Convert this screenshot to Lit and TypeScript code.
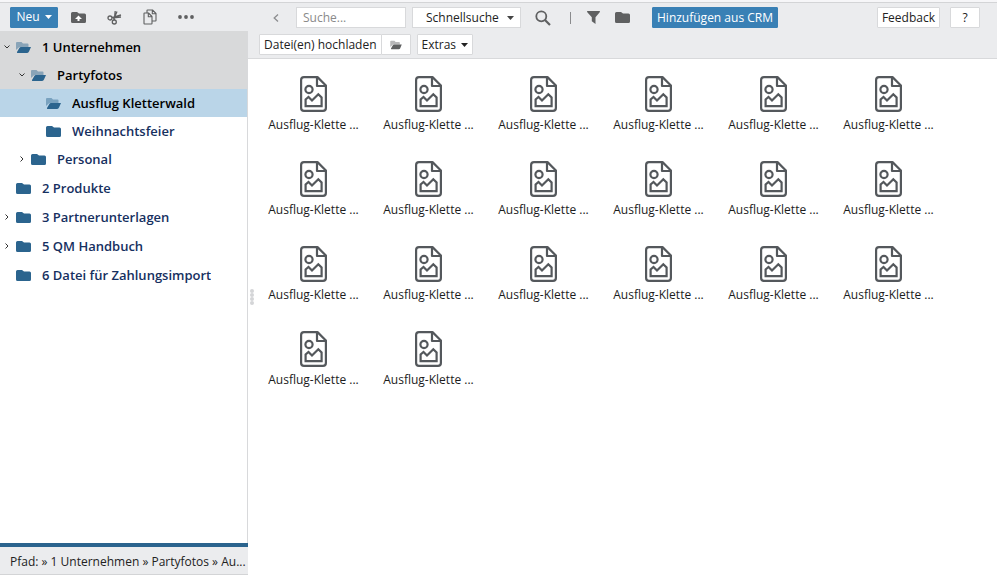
import { LitElement, html, css, svg, nothing } from "lit";
import { customElement, property, state } from "lit/decorators.js";
import { classMap } from "lit/directives/class-map.js";

interface TreeNode {
  label: string;
  open?: boolean;
  selected?: boolean;
  expandable?: boolean;
  children?: TreeNode[];
}

const TREE: TreeNode[] = [
  {
    label: "1 Unternehmen",
    open: true,
    expandable: true,
    children: [
      {
        label: "Partyfotos",
        open: true,
        expandable: true,
        children: [
          { label: "Ausflug Kletterwald", open: true, selected: true },
          { label: "Weihnachtsfeier" },
        ],
      },
      { label: "Personal", expandable: true },
    ],
  },
  { label: "2 Produkte" },
  { label: "3 Partnerunterlagen", expandable: true },
  { label: "5 QM Handbuch", expandable: true },
  { label: "6 Datei für Zahlungsimport" },
];

const FILES: string[] = Array.from({ length: 20 }, () => "Ausflug-Klette ...");

const folder = svg`<path d="M0 2.500Q0 1 1.500 1H6L8 2.500H13.500Q15 2.500 15 4V10.500Q15 12 13.500 12H1.500Q0 12 0 10.500Z"/>`;
const folderOpen = svg`
  <path opacity=".45" d="M0 9V2Q0 1 1 1H5.500L7 2.500H11.500Q12.500 2.500 12.500 3.500V6H4Q3 6 2.300 7Z"/>
  <path d="M1 11L3.200 7.200Q3.800 6 5 6H15L13 10.600Q12.500 12 11.200 12H1.500Q.7 12 1 11Z"/>`;

const icons = {
  folder: html`<svg width="15" height="13" viewBox="0 0 15 13" fill="currentColor" aria-hidden="true">${folder}</svg>`,
  folderOpen: html`<svg width="15" height="13" viewBox="0 0 15 13" fill="currentColor" aria-hidden="true">${folderOpen}</svg>`,
  smallOpen: html`<svg width="12" height="10" viewBox="0 0 15 13" fill="currentColor" aria-hidden="true">${folderOpen}</svg>`,
  newFolder: html`<svg width="15" height="13" viewBox="0 0 15 13" fill="currentColor" aria-hidden="true">${folder}
    <path d="M7.500 4.500L11 8H8.500V10H6.500V8H4Z" fill="#fff"/></svg>`,
  caret: html`<svg width="7" height="4" viewBox="0 0 7 4" fill="currentColor" aria-hidden="true"><path d="M0 0H7L3.500 4Z"/></svg>`,
  cut: html`<svg width="15" height="15" viewBox="0 0 15 15" fill="none" stroke="currentColor" stroke-width="1.300" aria-hidden="true">
    <circle cx="3" cy="8" r="2"/><circle cx="7.300" cy="12" r="2"/>
    <path d="M4.800 7.600L14 5M14 7L6 7.800M7.300 10L8.200 1M10 1.500L6.500 9.500"/></svg>`,
  copy: html`<svg width="14" height="16" viewBox="0 0 14 16" fill="none" stroke="currentColor" stroke-width="1.100" stroke-linejoin="round" aria-hidden="true">
    <path d="M4 4H1.500Q1 4 1 4.500V14.500Q1 15 1.500 15H8.500Q9 15 9 14.500V12"/>
    <path d="M4.500 1H9.500L13 4.500V11.500Q13 12 12.500 12H9M4 4V1.500Q4 1 4.500 1M9.300 1V4.700H13M4 4H5.500L9 7.500V12M5.300 4V7.700H9"/></svg>`,
  more: html`<svg width="16" height="4" viewBox="0 0 16 4" fill="currentColor" aria-hidden="true">
    <circle cx="2" cy="2" r="1.900"/><circle cx="8" cy="2" r="1.900"/><circle cx="14" cy="2" r="1.900"/></svg>`,
  back: html`<svg width="6" height="8" viewBox="0 0 6 8" fill="none" stroke="currentColor" stroke-width="1.300" aria-hidden="true"><path d="M5 .5L1.200 4L5 7.500"/></svg>`,
  search: html`<svg width="16" height="16" viewBox="0 0 16 16" fill="none" stroke="currentColor" stroke-width="1.800" aria-hidden="true">
    <circle cx="6.300" cy="6.300" r="5"/><path d="M10 10L15 15" stroke-width="2.200"/></svg>`,
  filter: html`<svg width="13" height="13" viewBox="0 0 13 13" fill="currentColor" aria-hidden="true"><path d="M.3 0H12.700Q13.200 .4 12.700 1.200L8.500 6.300V13L4.800 10.200V6.300L.3 1.200Q-.2 .4 .3 0Z"/></svg>`,
  chevDown: html`<svg width="6" height="4" viewBox="0 0 6 4" fill="none" stroke="#333" aria-hidden="true"><path d="M.5 .5L3 3L5.500 .5"/></svg>`,
  chevRight: html`<svg width="6" height="6" viewBox="-1 0 6 6" fill="none" stroke="#333" aria-hidden="true"><path d="M.5 .5L3 3L.5 5.500"/></svg>`,
  image: html`<svg width="27" height="36" viewBox="0 0 27 36" fill="none" stroke="#54585c" stroke-width="2.200" stroke-linejoin="round" aria-hidden="true">
    <path d="M4 1.100H17.500L25.900 9.500V32Q25.900 34.900 23 34.900H4Q1.100 34.900 1.100 32V4Q1.100 1.100 4 1.100Z"/>
    <path d="M17 1.500V10H25.500"/>
    <circle cx="9" cy="13.500" r="3.600"/>
    <path stroke-linejoin="miter" d="M5.600 30.200V23.500L8.500 21L12 24.500L18.300 18.300L21.600 21.500V30.200Z"/></svg>`,
};

@customElement("folder-tree")
export class FolderTree extends LitElement {
  @property({ attribute: false }) nodes: TreeNode[] = [];

  static styles = css`
    :host { display: block; }
    ul { list-style: none; margin: 0; padding: 0; }
    .root { border-top: 2px solid #d8d9da; }
    .root > li + li { margin-top: 1px; }
    .row {
      display: flex; align-items: center; width: 100%; height: 28px;
      border: 0; padding: 0; background: none; text-align: left;
      font: 600 13px "Open Sans", "Noto Sans", sans-serif; color: #16305f; cursor: pointer;
    }
    .open { background: #d8d9da; color: #000; }
    .selected { background: #bad5e8; }
    .level1 { padding-left: 15px; }
    .level2 { padding-left: 30px; }
    .toggle { display: flex; width: 16px; padding-left: 4px; box-sizing: border-box; flex: none; }
    .icon { display: flex; width: 26px; color: #2b648e; flex: none; }
    .label { white-space: nowrap; overflow: hidden; text-overflow: ellipsis; }
  `;

  private renderNode(node: TreeNode, level: number): unknown {
    const classes = {
      row: true,
      open: !!node.open,
      selected: !!node.selected,
      [`level${level}`]: true,
    };
    return html`<li>
      <button class=${classMap(classes)}>
        <span class="toggle">${node.expandable ? (node.open ? icons.chevDown : icons.chevRight) : nothing}</span>
        <span class="icon">${node.open ? icons.folderOpen : icons.folder}</span>
        <span class="label">${node.label}</span>
      </button>
      ${node.children ? html`<ul>${node.children.map((c) => this.renderNode(c, level + 1))}</ul>` : nothing}
    </li>`;
  }

  render() {
    return html`<ul class="root">${this.nodes.map((n) => this.renderNode(n, 0))}</ul>`;
  }
}

@customElement("app-root")
export class AppRoot extends LitElement {
  @state() private files = FILES;

  static styles = css`
    :host {
      display: flex; flex-direction: column; min-height: 100vh; box-sizing: border-box;
      border-top: 2px solid #f6f6f8; background: #fff; color: #222;
      font: 12px/16px "Open Sans", "Noto Sans", sans-serif;
    }
    button, input, select { font: inherit; color: inherit; box-sizing: border-box; margin: 0; }
    button { cursor: pointer; }
    svg { display: block; flex: none; }
    .page { position: relative; display: flex; flex: 1; border-top: 1px solid #d3d4d6; }
    .side { display: flex; flex-direction: column; width: 248px; flex: none; box-sizing: border-box; }
    .tools { display: flex; align-items: center; height: 28px; padding-left: 10px; background: #ebecee; color: #5f6061; }
    .btn {
      display: flex; align-items: center; justify-content: center; gap: 5px; height: 21px;
      padding: 0 4px; background: #fff; border: 1px solid #d8d9db; border-radius: 1px; white-space: nowrap;
    }
    .primary { background: #3980b5; border-color: #3980b5; color: #fff; }
    .plain { display: flex; align-items: center; justify-content: center; height: 21px; border: 0; padding: 0; background: none; color: #5f6061; }
    .tool { width: 36px; }
    .new { width: 48px; margin-right: 2px; }
    .tree { flex: 1; border-right: 1px solid #d8d9db; }
    .path {
      height: 32px; box-sizing: border-box; padding: 7px 0 0 10px; background: #ebecee;
      border-top: 4px solid #2b648e; border-bottom: 1px solid #d3d4d6; white-space: nowrap; overflow: hidden;
    }
    .main { flex: 1; min-width: 0; }
    .bar { padding: 4px 17px 3px 11px; background: #ebecee; border-bottom: 1px solid #d8d9db; }
    .line { display: flex; align-items: center; }
    .line + .line { margin-top: 6px; }
    .back { width: 34px; margin-right: 3px; color: #8b8c8e; }
    .search { width: 110px; height: 21px; padding: 0 6px; border: 1px solid #d8d9db; background: #fff; margin-right: 6px; }
    .search::placeholder { color: #8a8a8a; opacity: 1; }
    .choice { position: relative; display: flex; width: 109px; margin-right: 10px; color: #444; }
    .choice select { width: 100%; height: 21px; padding: 0 0 0 13px; appearance: none; border: 1px solid #d8d9db; border-radius: 0; background: #fff; color: #222; }
    .choice svg { position: absolute; right: 7px; top: 9px; pointer-events: none; }
    .lens { width: 24px; }
    .sep { width: 1px; height: 12px; margin: 0 14px 0 15px; background: #8a8b8d; }
    .act { width: 17px; }
    .act + .act { margin-left: 12px; }
    .crm { margin-left: 21px; }
    .right { display: flex; gap: 10px; margin-left: auto; }
    .help { width: 30px; }
    .pick { width: 30px; margin-left: -1px; margin-right: 6px; color: #5f6061; }
    .grip { position: absolute; left: 250px; top: 50%; display: grid; gap: 0; }
    .grip i { width: 4px; height: 4px; border-radius: 50%; background: #d4d5d7; }
    .files { list-style: none; margin: 0; padding: 17px 8px 0; display: grid; grid-template-columns: repeat(auto-fill, 115px); grid-auto-rows: 85px; }
    .file { display: flex; flex-direction: column; align-items: center; gap: 5px; color: #1c1c1c; text-decoration: none; white-space: nowrap; }
  `;

  render() {
    return html`
      <div class="page">
        <aside class="side">
          <div class="tools">
            <button class="btn primary new">Neu ${icons.caret}</button>
            <button class="plain tool" aria-label="Ordner anlegen">${icons.newFolder}</button>
            <button class="plain tool" aria-label="Ausschneiden">${icons.cut}</button>
            <button class="plain tool" aria-label="Kopieren">${icons.copy}</button>
            <button class="plain tool" aria-label="Mehr">${icons.more}</button>
          </div>
          <folder-tree class="tree" .nodes=${TREE}></folder-tree>
          <div class="path">Pfad: » 1 Unternehmen » Partyfotos » Au...</div>
        </aside>
        <main class="main">
          <div class="bar">
            <div class="line">
              <button class="plain back" aria-label="Zurück">${icons.back}</button>
              <input class="search" type="text" placeholder="Suche..." aria-label="Suche" />
              <div class="choice">
                <select aria-label="Suchart"><option>Schnellsuche</option></select>
                ${icons.caret}
              </div>
              <button class="plain lens" aria-label="Suchen">${icons.search}</button>
              <span class="sep"></span>
              <button class="plain act" aria-label="Filter">${icons.filter}</button>
              <button class="plain act" aria-label="Ordner">${icons.folder}</button>
              <button class="btn primary crm">Hinzufügen aus CRM</button>
              <div class="right">
                <button class="btn">Feedback</button>
                <button class="btn help">?</button>
              </div>
            </div>
            <div class="line">
              <button class="btn">Datei(en) hochladen</button>
              <button class="btn pick" aria-label="Datei wählen">${icons.smallOpen}</button>
              <button class="btn">Extras ${icons.caret}</button>
            </div>
          </div>
          <ul class="files">
            ${this.files.map((name) => html`<li><a class="file" href="#">${icons.image}<span>${name}</span></a></li>`)}
          </ul>
        </main>
        <div class="grip" aria-hidden="true"><i></i><i></i><i></i><i></i></div>
      </div>
    `;
  }
}
